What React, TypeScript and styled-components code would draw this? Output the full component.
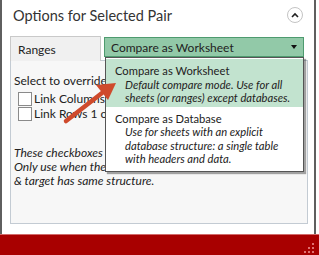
import styled, { createGlobalStyle } from "styled-components";

const GlobalStyle = createGlobalStyle`
  html, body {
    margin: 0;
    padding: 0;
    background: #ffffff;
    font-family: Lato, "Open Sans", sans-serif;
    color: #222;
  }
`

const Window = styled.div`
  position: relative;
  width: 319px;
  height: 255px;
  display: flex;
  flex-direction: column;
  overflow: hidden;
`

const Body = styled.div`
  flex: 1;
  display: flex;
  flex-direction: column;
  margin-right: 3px;
  border-left: 2px solid #5f5f5f;
  border-right: 2px solid #5f5f5f;
  background: #fff;
`

const Header = styled.div`
  height: 30px;
  display: flex;
  align-items: center;
  justify-content: space-between;
  padding: 0 11px 0 11px;
`

const Title = styled.span`
  font-size: 14.5px;
  color: #333;
`

const Collapse = styled.div`
  width: 14px;
  height: 14px;
  border: 1px solid #c4c4c4;
  border-radius: 50%;
  display: flex;
  align-items: center;
  justify-content: center;
`

const Content = styled.div`
  padding: 6px 6px 0 8px;
  display: flex;
  flex-direction: column;
`

const Row = styled.div`
  display: flex;
  align-items: flex-start;
  gap: 3px;
  position: relative;
  z-index: 2;
`

const RangesTab = styled.div`
  width: 91px;
  height: 25px;
  background: #f0f0f0;
  border: 1px solid #c9c9c9;
  border-bottom: none;
  display: flex;
  align-items: center;
  padding-left: 7px;
  box-sizing: border-box;
  font-size: 12px;
  margin-bottom: -1px;
`

const Dropdown = styled.div`
  position: relative;
  margin-top: 1px;
  width: 200px;
  height: 20px;
  box-sizing: border-box;
  background: #92c9a8;
  border: 1px solid #4e9b6f;
  display: flex;
  align-items: center;
  justify-content: space-between;
  padding: 0 6px 0 6px;
  font-size: 12px;
  white-space: nowrap;
`

const Caret = styled.span`
  width: 0;
  height: 0;
  border-left: 3px solid transparent;
  border-right: 3px solid transparent;
  border-top: 4px solid #111;
`

const Menu = styled.div`
  position: absolute;
  top: 19px;
  left: 0;
  width: 199px;
  box-sizing: border-box;
  background: #fff;
  border: 1px solid #555;
  box-shadow: 2px 2px 1px rgba(0, 0, 0, 0.35);
  padding: 1px 0 0 0;
`

const Option = styled.div<{ $active?: boolean }>`
  background: ${p => (p.$active ? "#c2e3cf" : "transparent")};
  padding: 5px 4px ${p => (p.$active ? "2px" : "5px")} 9px;
  font-size: 11.2px;
  line-height: 13.5px;
  white-space: nowrap;
`

const OptionNote = styled.div`
  font-style: italic;
  padding-left: 10px;
`

const Panel = styled.div`
  height: 164px;
  box-sizing: border-box;
  background: #f7f7f7;
  border: 1px solid #c3cbd3;
  padding: 12px 3px 0 3px;
  font-size: 12px;
  position: relative;
  z-index: 1;
`

const CheckRow = styled.label`
  display: flex;
  align-items: center;
  gap: 2px;
  height: 15px;
  padding-left: 4px;
  white-space: nowrap;
`

const Box = styled.span`
  width: 12px;
  height: 12px;
  border: 1px solid #8a8a8a;
  background: #fff;
`

const Prompt = styled.div`
  margin-bottom: 3px;
  white-space: nowrap;
`

const Note = styled.div`
  margin-top: 25px;
  font-style: italic;
  line-height: 14px;
  white-space: nowrap;
`

const Spacer = styled.div`
  flex: 1;
`

const Footer = styled.div`
  height: 20px;
  background: #a80000;
  border-top: 1px solid #d26a6a;
  position: relative;
`

const Grip = styled.svg`
  position: absolute;
  right: 5px;
  bottom: 2px;
`

const Arrow = styled.svg`
  position: absolute;
  left: 0;
  top: 0;
  z-index: 5;
  pointer-events: none;
`

function App() {
  return (
    <>
      <GlobalStyle />
      <Window>
        <Body>
          <Header>
            <Title>Options for Selected Pair</Title>
            <Collapse>
              <svg width="8" height="6" viewBox="0 0 8 6">
                <path d="M1 5 L4 2 L7 5" fill="none" stroke="#222" strokeWidth="1.6" />
              </svg>
            </Collapse>
          </Header>
          <Content>
            <Row>
              <RangesTab>Ranges</RangesTab>
              <Dropdown>
                <span>Compare as Worksheet</span>
                <Caret />
                <Menu>
                  <Option $active>
                    Compare as Worksheet
                    <OptionNote>Default compare mode. Use for all<br />sheets (or ranges) except databases.</OptionNote>
                  </Option>
                  <Option>
                    Compare as Database
                    <OptionNote>Use for sheets with an explicit<br />database structure: a single table<br />with headers and data.</OptionNote>
                  </Option>
                </Menu>
              </Dropdown>
            </Row>
            <Panel>
              <Prompt>Select to override default links:</Prompt>
              <CheckRow><Box />Link Columns by header</CheckRow>
              <CheckRow><Box />Link Rows 1 on 1</CheckRow>
              <Note>
                These checkboxes override links.<br />
                Only use when the linked source<br />
                &amp; target has same structure.
              </Note>
            </Panel>
          </Content>
          <Spacer />
        </Body>
        <Footer>
          <Grip width="10" height="10" viewBox="0 0 10 10">
            <g fill="#e07070">
              <rect x="8" y="0" width="2" height="2" />
              <rect x="4" y="4" width="2" height="2" />
              <rect x="8" y="4" width="2" height="2" />
              <rect x="0" y="8" width="2" height="2" />
              <rect x="4" y="8" width="2" height="2" />
              <rect x="8" y="8" width="2" height="2" />
            </g>
          </Grip>
        </Footer>
        <Arrow width="319" height="255" viewBox="0 0 319 255">
          <line x1="66" y1="121" x2="102" y2="93" stroke="#cf4a2c" strokeWidth="4.5" strokeLinecap="round" />
          <polygon points="116,83 96,85 108,100" fill="#cf4a2c" />
        </Arrow>
      </Window>
    </>
  )
}

export default App;
